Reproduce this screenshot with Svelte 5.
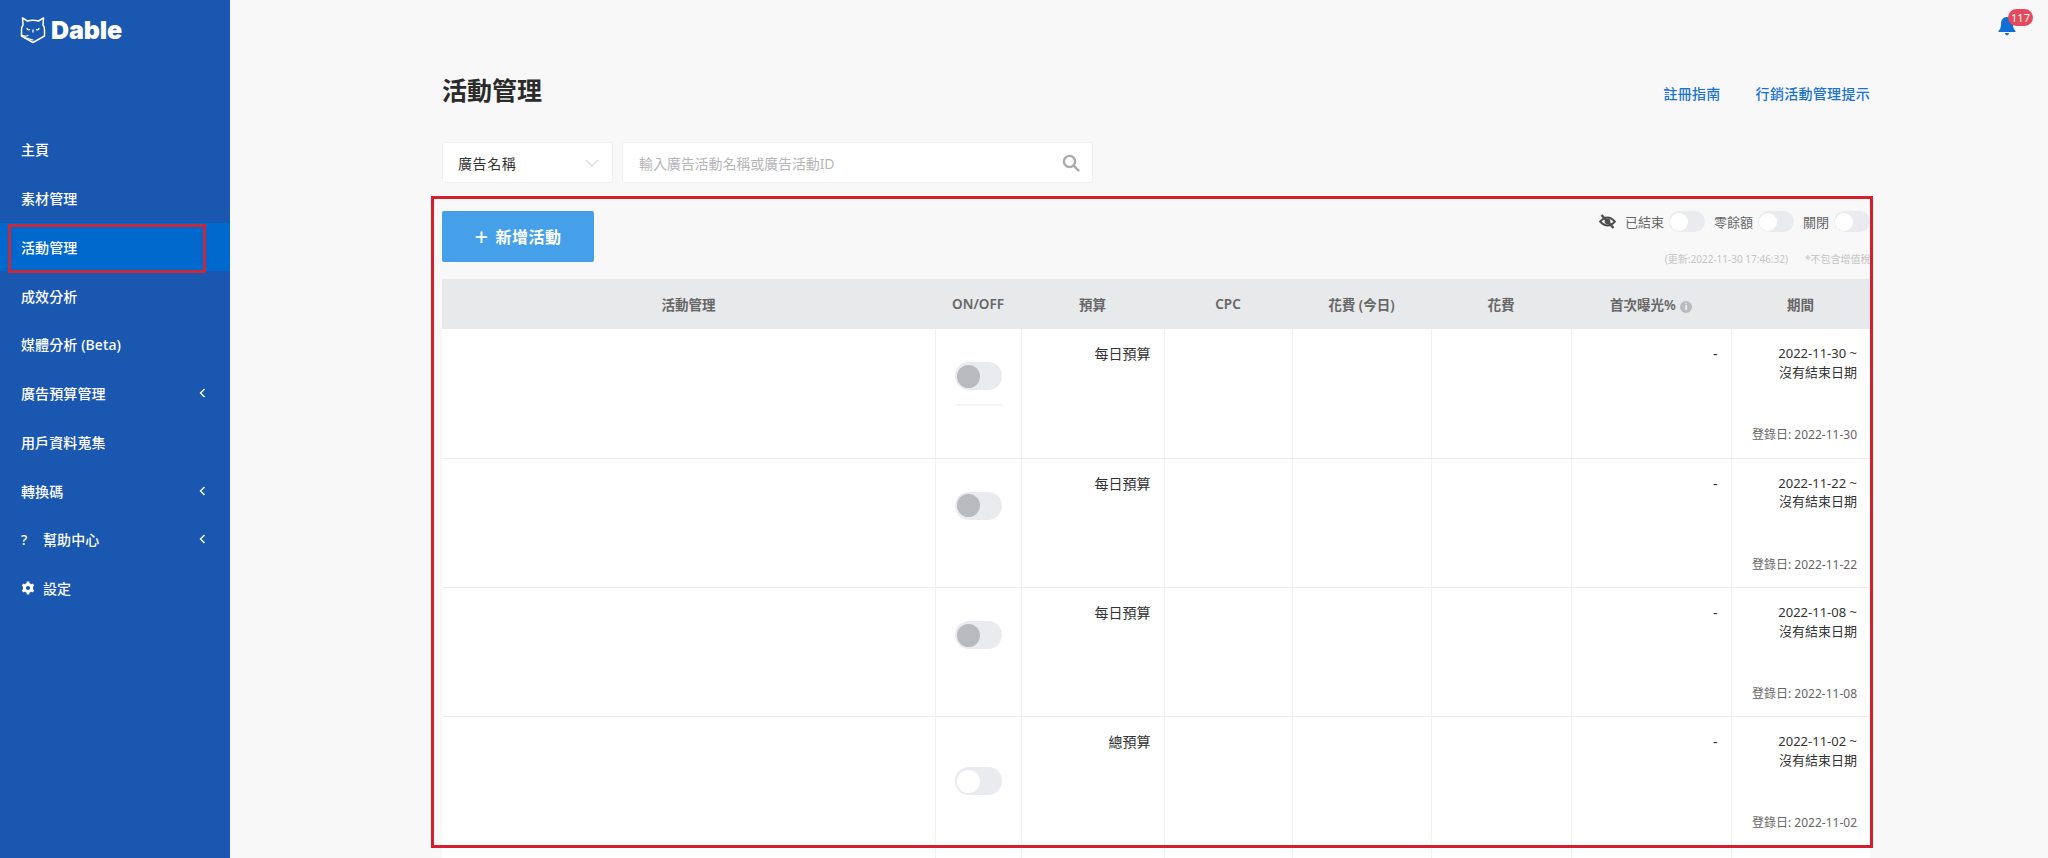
<script>
  const menu = [
    { label: '主頁' },
    { label: '素材管理' },
    { label: '活動管理', active: true },
    { label: '成效分析' },
    { label: '媒體分析 (Beta)' },
    { label: '廣告預算管理', arrow: true },
    { label: '用戶資料蒐集' },
    { label: '轉換碼', arrow: true },
    { label: '幫助中心', arrow: true, icon: 'help' },
    { label: '設定', icon: 'gear' }
  ];

  const filters = [
    { label: '已結束', eye: true },
    { label: '零餘額' },
    { label: '關閉' }
  ];

  const rows = [
    { budget: '每日預算', start: '2022-11-30', on: true, ghost: true },
    { budget: '每日預算', start: '2022-11-22', on: true },
    { budget: '每日預算', start: '2022-11-08', on: true },
    { budget: '總預算', start: '2022-11-02', on: false, low: true },
    { budget: '', start: '' }
  ];
</script>

<div class="layout">
  <aside class="sidebar">
    <div class="logo">
      <svg width="26" height="28" viewBox="0 0 26 28" fill="none" stroke="#fff" stroke-width="1.5" stroke-linejoin="round" stroke-linecap="round">
        <path d="M3 9 L2.5 2 L7.5 5 Q13 3.6 18.5 5 L23.5 2 L23 9 Q24.5 11 24.5 14 V20 L13 26.5 L1.5 20 V14 Q1.5 11 3 9 Z" />
        <path d="M1.5 19 Q5 21 8 19.5 M4.5 21.6 L13 24" stroke-width="1.2" />
        <path d="M7 12.5 Q7.8 14.5 9.6 13.6 M16.4 13.6 Q18.2 14.5 19 12.5 M13 14 V16" stroke-width="1.3" />
      </svg>
      <span class="wordmark">Dable</span>
    </div>
    <nav class="menu">
      {#each menu as item}
        <div class="menu-item" class:active={item.active}>
          {#if item.icon === 'help'}
            <span class="menu-icon">?</span>
          {:else if item.icon === 'gear'}
            <span class="menu-icon">
              <svg width="14" height="14" viewBox="0 0 14 14" fill="none" stroke="#fff">
                <circle cx="7" cy="7" r="3.6" stroke-width="3" />
                <path d="M7 .5V3M7 11v2.5M1.4 3.75l2.2 1.25M10.4 9l2.2 1.25M1.4 10.25L3.6 9M10.4 5l2.2-1.25" stroke-width="2.6" />
              </svg>
            </span>
          {/if}
          <span class="menu-label">{item.label}</span>
          {#if item.arrow}
            <svg class="chev" width="7" height="10" viewBox="0 0 7 10" fill="none" stroke="#fff" stroke-width="1.4">
              <path d="M5.5 1 L1.5 5 L5.5 9" />
            </svg>
          {/if}
        </div>
      {/each}
    </nav>
  </aside>

  <main class="main">
    <div class="topbar">
      <div class="bell">
        <svg width="20" height="20" viewBox="0 0 20 20" fill="#0f6fd6">
          <path d="M10 1 C6 1 4 4 4 8 C4 12 3 13.5 1.5 15 V16 H18.5 V15 C17 13.5 16 12 16 8 C16 4 14 1 10 1 Z" />
          <path d="M7.8 17 H12.2 Q11.5 19.4 10 19.4 Q8.5 19.4 7.8 17 Z" />
        </svg>
        <span class="badge">117</span>
      </div>
    </div>

    <div class="content">
      <header class="page-head">
        <h1>活動管理</h1>
        <div class="links">
          <span>註冊指南</span>
          <span>行銷活動管理提示</span>
        </div>
      </header>

      <div class="search-row">
        <div class="select">
          <span>廣告名稱</span>
          <svg width="14" height="8" viewBox="0 0 14 8" fill="none" stroke="#dcdde0" stroke-width="1.4">
            <path d="M1 1 L7 7 L13 1" />
          </svg>
        </div>
        <div class="search">
          <span>輸入廣告活動名稱或廣告活動ID</span>
          <svg width="18" height="18" viewBox="0 0 18 18" fill="none" stroke="#a9abae" stroke-width="2.4">
            <circle cx="7.5" cy="7.5" r="5.6" />
            <path d="M11.6 11.6 L16.4 16.4" stroke-linecap="round" />
          </svg>
        </div>
      </div>

      <section class="panel">
        <div class="annot panel-box"></div>
        <div class="toolbar">
          <button class="add"><span class="plus">+</span>新增活動</button>
          <div class="tools">
            <div class="filters">
              {#each filters as f}
                <div class="filter">
                  {#if f.eye}
                    <svg width="17" height="15" viewBox="0 0 17 15" fill="none" stroke="#4d4d4d" stroke-width="2.4">
                      <path d="M1.2 7.5 Q8.5 -0.6 15.8 7.5 Q8.5 15.6 1.2 7.5 Z" stroke-width="2" />
                      <circle cx="8.5" cy="7.5" r="2" stroke-width="1.8" />
                      <path d="M2.5 1 L14.5 14" />
                    </svg>
                  {/if}
                  <span>{f.label}</span>
                  <div class="switch small"><i></i></div>
                </div>
              {/each}
            </div>
            <div class="meta">
              <span>(更新:2022-11-30 17:46:32)</span>
              <span class="vat">*不包含增值稅</span>
            </div>
          </div>
        </div>

        <table>
          <colgroup>
            <col style="width:493px" />
            <col style="width:86px" />
            <col style="width:143px" />
            <col style="width:128px" />
            <col style="width:139px" />
            <col style="width:140px" />
            <col style="width:160px" />
            <col style="width:139px" />
          </colgroup>
          <thead>
            <tr>
              <th>活動管理</th>
              <th>ON/OFF</th>
              <th>預算</th>
              <th>CPC</th>
              <th>花費 (今日)</th>
              <th>花費</th>
              <th>首次曝光%<span class="info">i</span></th>
              <th>期間</th>
            </tr>
          </thead>
          <tbody>
            {#each rows as row}
              <tr>
                <td></td>
                <td class="toggle-cell">
                  {#if row.start}
                    <div class="switch" class:on={row.on} class:low={row.low}><i></i></div>
                    {#if row.ghost}<div class="ghost"></div>{/if}
                  {/if}
                </td>
                <td class="num">{row.budget}</td>
                <td></td>
                <td></td>
                <td></td>
                <td class="num">{row.start ? '-' : ''}</td>
                <td class="num period">
                  {#if row.start}
                    <div>{row.start} ~</div>
                    <div>沒有結束日期</div>
                    <div class="reg">登錄日: {row.start}</div>
                  {/if}
                </td>
              </tr>
            {/each}
          </tbody>
        </table>
      </section>
    </div>
  </main>
</div>

<div class="annot nav-box"></div>

<style>
  :global(body) {
    overflow: hidden;
    background: #f8f8f8;
    font-family: "Noto Sans", "Noto Sans CJK TC", sans-serif;
    color: #333;
  }

  .layout {
    display: flex;
    height: 858px;
    overflow: hidden;
  }

  .sidebar {
    flex: 0 0 230px;
    background: #1a57b1;
    color: #fff;
  }

  .main {
    flex: 1;
    min-width: 0;
  }

  .logo {
    display: flex;
    align-items: center;
    gap: 5px;
    height: 28px;
    padding: 16px 0 0 20px;
  }

  .wordmark {
    font-family: Inter, sans-serif;
    font-weight: 900;
    font-size: 25px;
    letter-spacing: -0.1px;
  }

  .menu {
    margin-top: 81px;
  }

  .menu-item {
    display: flex;
    align-items: center;
    height: 48.75px;
    padding: 0 24px 0 21px;
    font-size: 14px;
    font-weight: 500;
    letter-spacing: 0.1px;
  }

  .menu-item.active {
    background: #0069cd;
  }

  .menu-label {
    flex: 1;
  }

  .menu-icon {
    display: flex;
    width: 22px;
    font-size: 14px;
  }

  .topbar {
    display: flex;
    justify-content: flex-end;
    height: 60px;
    padding-right: 31px;
  }

  .bell {
    position: relative;
    margin-top: 16px;
    width: 20px;
    height: 20px;
  }

  .badge {
    position: absolute;
    left: 11px;
    top: -7px;
    width: 25px;
    height: 17px;
    border-radius: 9px;
    background: #e7495c;
    color: #fff;
    font-size: 11px;
    line-height: 17px;
    text-align: center;
  }

  .content {
    margin-left: 212px;
    width: 1428px;
  }

  .page-head {
    display: flex;
    justify-content: space-between;
    align-items: center;
    height: 60px;
  }

  h1 {
    margin: 0;
    font-size: 25px;
    font-weight: 700;
    color: #2b2b2b;
    line-height: 60px;
  }

  .links {
    display: flex;
    gap: 35px;
    margin-top: 6px;
    font-size: 14px;
    color: #1a73d2;
    font-weight: 500;
    letter-spacing: 0.3px;
  }

  .search-row {
    display: flex;
    gap: 9px;
    height: 41px;
    margin-top: 22px;
    font-size: 14px;
  }

  .select, .search {
    display: flex;
    align-items: center;
    justify-content: space-between;
    background: #fff;
    border: 1px solid #f1f1f1;
    border-radius: 2px;
    box-sizing: border-box;
  }

  .select {
    flex: 0 0 171px;
    padding: 0 13px 0 15px;
    color: #333;
    letter-spacing: 0.6px;
  }

  .search {
    flex: 0 0 471px;
    padding: 0 12px 0 16px;
    color: #b5b6b8;
    letter-spacing: -0.1px;
  }

  .panel {
    position: relative;
    margin-top: 13px;
    padding-top: 15px;
  }

  .annot {
    position: absolute;
    box-sizing: border-box;
    border: 3px solid #d51f2e;
    pointer-events: none;
    z-index: 2;
  }

  .panel-box {
    left: -11px;
    top: 0;
    width: 1442px;
    height: 652px;
  }

  .nav-box {
    left: 8px;
    top: 224px;
    width: 198px;
    height: 49px;
    border-color: #c6283c;
  }

  .toolbar {
    display: flex;
    justify-content: space-between;
    height: 68px;
  }

  .add {
    width: 152px;
    height: 51px;
    border: 0;
    border-radius: 2px;
    background: #46a0e9;
    color: #fff;
    font: inherit;
    font-size: 16px;
    font-weight: 700;
    letter-spacing: 0.5px;
  }

  .plus {
    margin-right: 7px;
    font-size: 24px;
    font-weight: 400;
    line-height: 1;
    vertical-align: -3px;
  }

  .tools {
    width: 300px;
    overflow: hidden;
  }

  .filters {
    display: flex;
    justify-content: flex-end;
    gap: 9px;
    height: 21px;
  }

  .filter {
    display: flex;
    align-items: center;
    gap: 5px;
    font-size: 13px;
    color: #666;
  }

  .filter svg {
    margin-right: 4px;
  }

  .meta {
    display: flex;
    justify-content: flex-end;
    gap: 17px;
    margin-top: 19px;
    font-size: 10px;
    line-height: 16px;
    color: #c4c4c4;
    white-space: nowrap;
  }

  .vat {
    flex: 0 0 65px;
    overflow: hidden;
  }

  .switch {
    position: relative;
    box-sizing: border-box;
    width: 47px;
    height: 28px;
    border-radius: 14px;
    background: #e9ebee;
  }

  .switch i {
    position: absolute;
    left: 2px;
    top: 2.5px;
    width: 23px;
    height: 23px;
    border-radius: 50%;
    background: #fff;
  }

  .switch.on i {
    background: #b9bac0;
  }

  .switch.small {
    width: 36px;
    height: 21px;
    border-radius: 11px;
  }

  .switch.small i {
    left: 1px;
    top: 1.5px;
    width: 18px;
    height: 18px;
  }

  table {
    width: 1428px;
    table-layout: fixed;
    border-collapse: collapse;
    background: #fff;
    font-size: 14px;
  }

  th {
    height: 50px;
    padding: 0;
    background: #e8e9eb;
    color: #666;
    font-size: 13.5px;
    font-weight: 600;
  }

  .info {
    display: inline-block;
    width: 12px;
    height: 12px;
    margin-left: 4px;
    border-radius: 50%;
    background: #b9bbc0;
    color: #fff;
    font-size: 9px;
    line-height: 12px;
    vertical-align: 0;
  }

  td {
    height: 129.3px;
    box-sizing: border-box;
    padding: 15px 13px 0;
    vertical-align: top;
    border-right: 1px solid #f0f1f2;
    border-bottom: 1px solid #eceef0;
    line-height: 19px;
  }

  td:last-child {
    border-right: 0;
  }

  .num {
    text-align: right;
    color: #333;
  }

  .toggle-cell {
    padding: 33px 19px 0;
  }

  .switch.low {
    margin-top: 17px;
  }

  .ghost {
    height: 2px;
    margin-top: 14px;
    background: #f5f5f6;
  }

  .period {
    color: #333;
    font-size: 13px;
    line-height: 18.5px;
  }

  .reg {
    margin-top: 45px;
    font-size: 12px;
    color: #666;
  }
</style>
